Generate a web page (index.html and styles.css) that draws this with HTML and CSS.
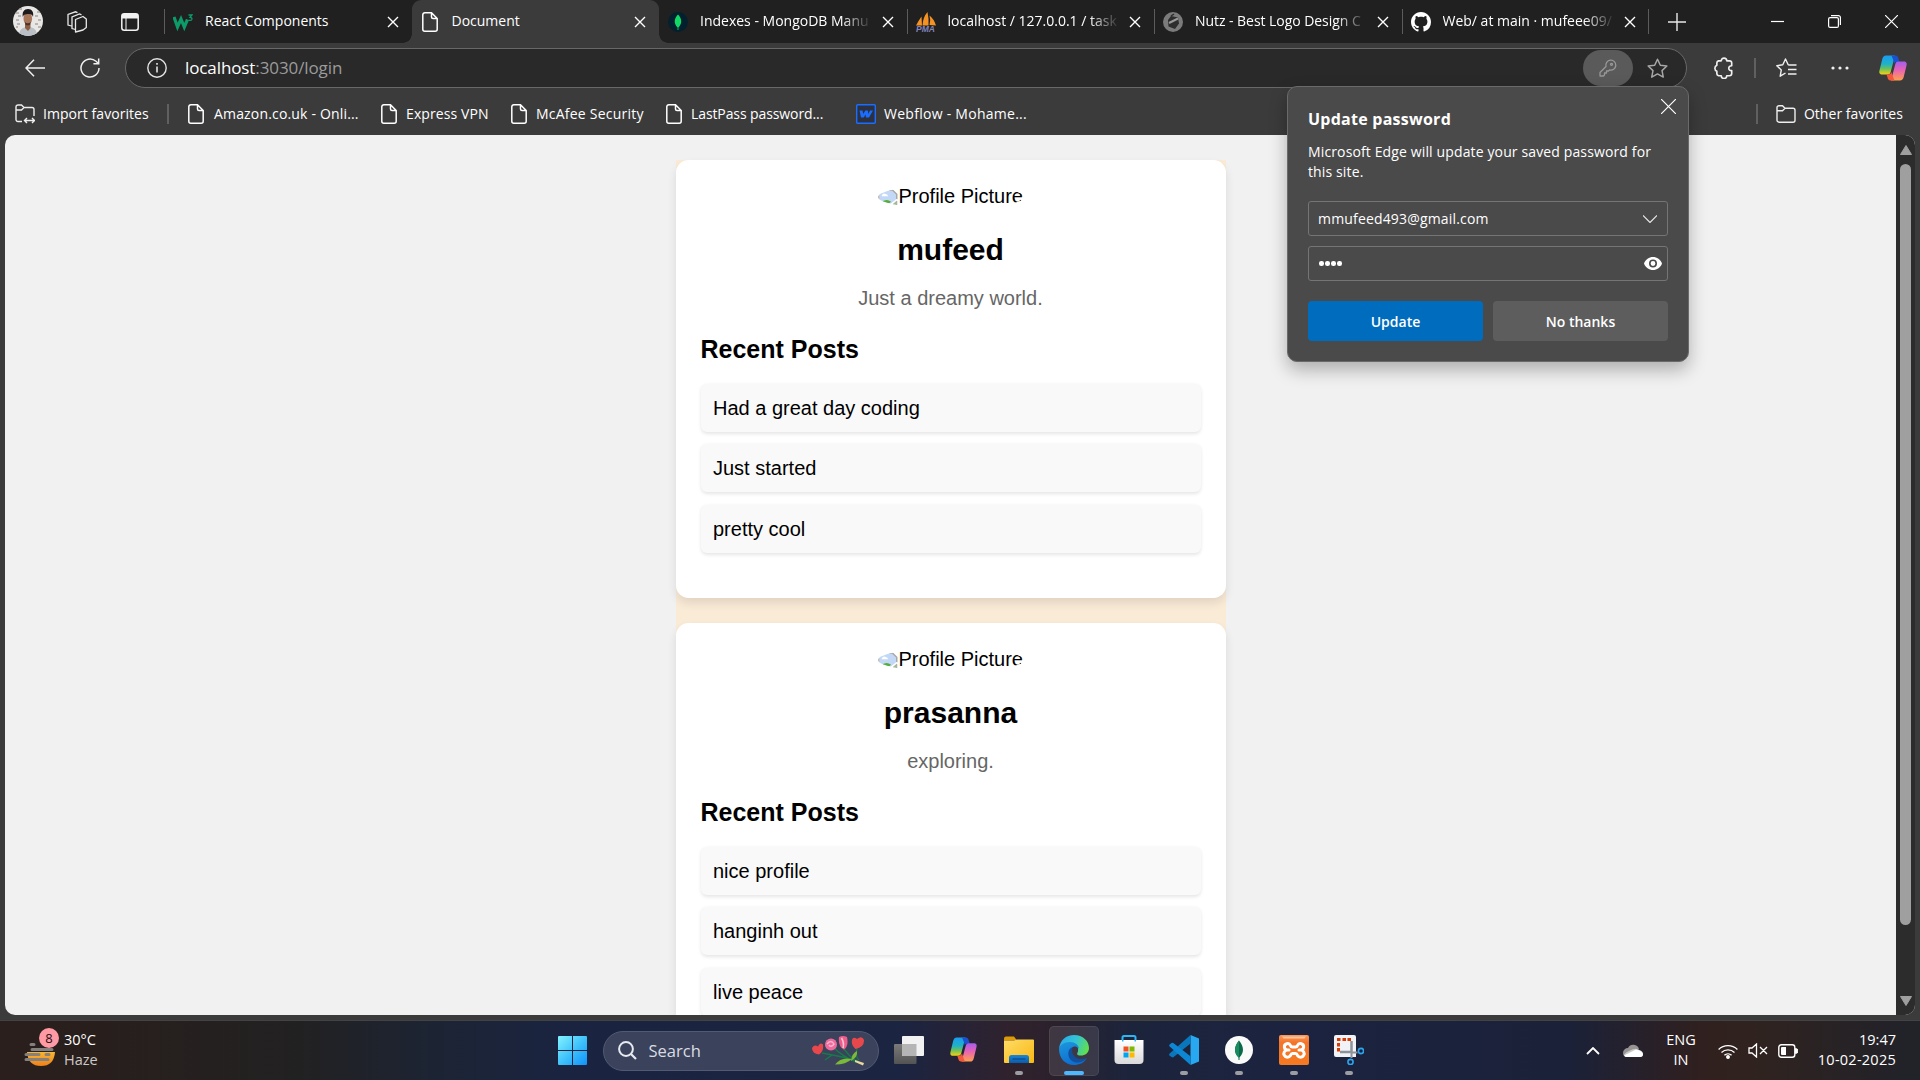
FILE: index.html
```html
<!DOCTYPE html>
<html lang="en">
<head>
<meta charset="utf-8">
<title>Document</title>
<link rel="stylesheet" href="styles.css">
</head>
<body>
<svg class="defs" width="0" height="0" aria-hidden="true">
  <defs>
    <linearGradient id="gWin" x1="0" y1="0" x2="1" y2="1"><stop offset="0" stop-color="#84f3ff"/><stop offset=".5" stop-color="#41c3fb"/><stop offset="1" stop-color="#0f93fb"/></linearGradient>
    <linearGradient id="gCopA" x1="0" y1="0" x2="0" y2="1"><stop offset="0" stop-color="#1b9cf0"/><stop offset=".45" stop-color="#1fb2c9"/><stop offset=".7" stop-color="#6cc05c"/><stop offset="1" stop-color="#f5d212"/></linearGradient>
    <linearGradient id="gCopB" x1="0" y1="0" x2="0" y2="1"><stop offset="0" stop-color="#a45cf0"/><stop offset=".45" stop-color="#e763b4"/><stop offset="1" stop-color="#ffa04c"/></linearGradient>
    <linearGradient id="gFold" x1="0" y1="0" x2="1" y2="1"><stop offset="0" stop-color="#ffdc66"/><stop offset="1" stop-color="#f8b814"/></linearGradient>
    <linearGradient id="gFoldB" x1="0" y1="0" x2="0" y2="1"><stop offset="0" stop-color="#1a86d6"/><stop offset="1" stop-color="#0b5cab"/></linearGradient>
    <linearGradient id="gEdgeT" x1="0" y1=".3" x2="1" y2=".6"><stop offset="0" stop-color="#2aa9ea"/><stop offset=".5" stop-color="#33c3d6"/><stop offset="1" stop-color="#62e04a"/></linearGradient>
    <linearGradient id="gEdgeB" x1="0" y1="0" x2=".4" y2="1"><stop offset="0" stop-color="#1c96dd"/><stop offset="1" stop-color="#0e6fd0"/></linearGradient>
    <linearGradient id="gStore" x1="0" y1="0" x2="0" y2="1"><stop offset="0" stop-color="#fff"/><stop offset="1" stop-color="#d9d9d9"/></linearGradient>
    <linearGradient id="gXa" x1="0" y1="0" x2="0" y2="1"><stop offset="0" stop-color="#fb9a5a"/><stop offset=".25" stop-color="#f4752a"/><stop offset="1" stop-color="#f57a20"/></linearGradient>
    <linearGradient id="gSun" x1="0" y1="0" x2="0" y2="1"><stop offset="0" stop-color="#f8b733"/><stop offset="1" stop-color="#f08019"/></linearGradient>
    <linearGradient id="gTvD" x1="0" y1="0" x2="0" y2="1"><stop offset="0" stop-color="#7a7a7a"/><stop offset="1" stop-color="#535353"/></linearGradient>
    <symbol id="x" viewBox="0 0 12 12"><path d="M1 1l10 10M11 1L1 11" fill="none" stroke="currentColor" stroke-width="1.4"/></symbol>
    <symbol id="page" viewBox="0 0 16 20"><path d="M2.8.8h6.7l5.7 5.7v10.7a2 2 0 0 1-2 2H2.8a2 2 0 0 1-2-2V2.800a2 2 0 0 1 2-2zM9.500.8v4.200a1.500 1.500 0 0 0 1.500 1.500h4.200" fill="none" stroke="currentColor" stroke-width="1.500"/></symbol>
    <symbol id="copilot" viewBox="0 0 28 26">
      <path d="M7 .5h9L11.600 17.200q-.6 2.300-2.800 2.300H3.200C0 19.500 0 17 .6 15L3.300 4C3.900 1.700 5 .5 7 .5z" fill="url(#gCopA)"/>
      <path d="M12.500.5h4c2 0 2.600 1.500 3.100 3.500l.9 3h-3c-1.200 0-1.900.7-2.200 1.700L14.300 5z" fill="#1b50cf"/>
      <path d="M21 25.500h-9l4.400-16.700q.6-2.300 2.800-2.300h5.600c3.200 0 3.200 2.500 2.600 4.500L24.700 22c-.6 2.300-1.700 3.500-3.700 3.500z" fill="url(#gCopB)"/>
      <path d="M15.500 25.500h-4c-2 0-2.600-1.500-3.100-3.500l-.9-2.600h2c1.600 0 2.500-.9 2.900-2.400l1.300 4z" fill="#f4583a"/>
    </symbol>
    <symbol id="broken" viewBox="0 0 16 16">
      <path d="M1 1.500h10.500L15 5v4l-8 6H1z" fill="#c3d8f7"/><path d="M9 1.500h2.500L15 5v4" fill="none" stroke="#a9a9a9" stroke-width="1.200"/><path d="M.6 1.500v13" stroke="#a9a9a9"/>
      <path d="M3 6q1.200-2.500 3.200-1.200Q8 5 8 6.500H3z" fill="#fff"/><path d="M2 14.500v-2.200q4-4.600 8.500-1.300L6 14.500z" fill="#56ad38"/><path d="M15 8.500v6H8z" fill="#fff"/><path d="M15 10.500v4h-4.500z" fill="#8fc57c" stroke="#a9a9a9" stroke-width=".8"/>
    </symbol>
  </defs>
</svg>

<header class="tabstrip">
  <div class="strip-tools">
    <svg class="avatar" viewBox="0 0 30 30"><clipPath id="av"><circle cx="15" cy="15" r="15"/></clipPath><g clip-path="url(#av)"><rect width="30" height="30" fill="#e9e7e6"/><path d="M2 7h4M24 6h3M3 14h3M25 14h3M3 21h2M25 21h3M6 3h3M5 10h3M22 10h3M4 18h3M22 18h3" stroke="#aaa5a2" stroke-width="1.600"/><path d="M6 30c0-7 4-9 9-9s9 2 9 9z" fill="#b9bfc4"/><path d="M12 18h5.500v4L15 25l-3-3z" fill="#8c5f45"/><ellipse cx="14.800" cy="12.500" rx="4.300" ry="6.500" fill="#a8765a"/><path d="M9.800 11C9 6 11 3 15 3s6 3 5 8c-.7-2.300-1.700-3-5-3s-4.300.7-5.200 3z" fill="#1d1b1d"/><path d="M11.800 16q3 2.500 6 0l-.6 2.500q-2.400 1.700-4.800 0z" fill="#4a3227"/></g></svg>
    <svg class="i-workspaces" viewBox="0 0 22 22" fill="none" stroke="#e8e8e8" stroke-width="1.300"><path d="M9.500 8.500l7.500-3 3.300 2.500v8.500l-3.300 2.500-7.500 2z" stroke-linejoin="round"/><path d="M9.500 18.500L6 17.500V6l7.500-3 2 .8M5.500 15L2 14V3.500L9.500.8l2 .8"/></svg>
    <svg class="i-vtabs" viewBox="0 0 18 18"><rect x=".8" y=".8" width="16.400" height="16.400" rx="2.500" fill="none" stroke="#f2f2f2" stroke-width="1.500"/><path d="M1 1h16v4.500H1z" fill="#f2f2f2"/><path d="M5 5v12" stroke="#f2f2f2" stroke-width="1"/></svg>
  </div>
  <div class="tab lead">
    <svg class="fav" viewBox="0 0 20 20"><path d="M1 5l3.500 10L8 7l3.300 8L14.500 7.500" fill="none" stroke="#0d9b69" stroke-width="3.200"/><path d="M15.500 3H19l-2 2.300q2.300.3 1.800 2.200-.7 1.500-3.300.6" fill="none" stroke="#0d9b69" stroke-width="1.300"/></svg>
    <span class="label">React Components</span><svg class="close"><use href="#x"/></svg>
  </div>
  <div class="tab active">
    <svg class="fav pg"><use href="#page"/></svg>
    <span class="label">Document</span><svg class="close"><use href="#x"/></svg>
  </div>
  <div class="tab">
    <svg class="fav" viewBox="0 0 20 20"><circle cx="10" cy="10" r="10" fill="#02202e"/><path d="M10 2.500c4 4 4.500 9 .4 13V18h-.8v-2.500C5.500 11.500 6 6.500 10 2.500z" fill="#12d965"/></svg>
    <span class="label fade">Indexes - MongoDB Manu</span><svg class="close"><use href="#x"/></svg>
  </div>
  <div class="tab sep">
    <svg class="fav" viewBox="0 0 20 20"><path d="M0 13.500Q3 8 5.500 4.500l.5 9zM6.500 13.500Q7 5 11.500 0q1.500 7 1 13.500zM13.500 13Q15 8 13.500 3.500 18 7 20 13.500z" fill="#f49323"/><text x="0" y="20" class="pma">PMA</text></svg>
    <span class="label fade">localhost / 127.0.0.1 / task</span><svg class="close"><use href="#x"/></svg>
  </div>
  <div class="tab sep">
    <svg class="fav" viewBox="0 0 20 20"><circle cx="10" cy="10" r="10" fill="#7b7b7b"/><path d="M5 8l3-4 7 1.500 1 6-4 5.500-6.500-2.500z" fill="#2d2d2d"/><path d="M6 11l9-4.500" stroke="#999" stroke-width="2"/><path d="M8 4l3-2" stroke="#2d2d2d" stroke-width="1.500"/></svg>
    <span class="label fade nutz">Nutz - Best Logo Design C</span><svg class="close"><use href="#x"/></svg>
  </div>
  <div class="tab sep last">
    <svg class="fav" viewBox="0 0 16 16"><path fill="#fff" d="M8 0C3.580 0 0 3.580 0 8c0 3.540 2.290 6.530 5.470 7.590.4.070.55-.17.55-.38 0-.19-.01-.82-.01-1.490-2.010.37-2.530-.49-2.690-.94-.09-.23-.48-.94-.82-1.130-.28-.15-.68-.52-.01-.53.63-.01 1.080.58 1.230.82.72 1.210 1.870.87 2.330.66.07-.52.28-.87.51-1.070-1.780-.2-3.640-.89-3.640-3.950 0-.87.31-1.590.82-2.150-.08-.2-.36-1.020.08-2.120 0 0 .67-.21 2.200.82.64-.18 1.320-.27 2-.27s1.360.09 2 .27c1.530-1.040 2.200-.82 2.200-.82.44 1.100.16 1.920.08 2.120.51.56.82 1.270.82 2.150 0 3.070-1.870 3.750-3.650 3.950.29.25.54.73.54 1.480 0 1.070-.01 1.930-.01 2.200 0 .21.15.46.55.38A8.010 8.010 0 0 0 16 8c0-4.420-3.580-8-8-8z"/></svg>
    <span class="label fade">Web/ at main · mufeee09/</span><svg class="close"><use href="#x"/></svg>
  </div>
  <svg class="plus" viewBox="0 0 18 18"><path d="M9 0v18M0 9h18" stroke="#e8e8e8" stroke-width="1.400"/></svg>
  <div class="wincontrols">
    <svg viewBox="0 0 13 13"><path d="M0 6.500h13" stroke="#fff" stroke-width="1.200"/></svg>
    <svg viewBox="0 0 13 13" fill="none" stroke="#fff" stroke-width="1.200"><rect x=".6" y="2.600" width="9.800" height="9.800" rx="1.500"/><path d="M3 .6h7.400a2 2 0 0 1 2 2V10"/></svg>
    <svg viewBox="0 0 13 13"><path d="M0 0l13 13M13 0L0 13" stroke="#fff" stroke-width="1.200"/></svg>
  </div>
</header>

<div class="toolbar">
  <svg class="i-back" viewBox="0 0 20 18" fill="none" stroke="#f0f0f0" stroke-width="1.500"><path d="M20 9H1M9 .8L1 9l8 8.200"/></svg>
  <svg class="i-reload" viewBox="0 0 20 20" fill="none" stroke="#f0f0f0" stroke-width="1.500"><path d="M19 10a9 9 0 1 1-3-6.700L18.500 5.500M18.700 .5v5.300h-5.300"/></svg>
  <div class="address">
    <svg class="i-info" viewBox="0 0 20 20"><circle cx="10" cy="10" r="9.200" fill="none" stroke="#e4e4e4" stroke-width="1.400"/><path d="M10 8.500v6M10 5v1.800" stroke="#e4e4e4" stroke-width="1.600"/></svg>
    <span class="url"><b>localhost</b>:3030/login</span>
    <span class="keypill"><svg viewBox="0 0 18 18" fill="none" stroke="#989898" stroke-width="1.300"><path d="M7 7.500A5 5 0 1 1 10.500 11L9.500 12H7.500v2H5.500v2L4.500 17H1v-3.500z" stroke-linejoin="round"/><circle cx="12.500" cy="5.300" r="1"/></svg></span>
    <svg class="i-star" viewBox="0 0 20 20"><path d="M10 1.200l2.700 5.700 6.200.8-4.600 4.300 1.200 6.200L10 15.200l-5.500 3 1.200-6.200L1.100 7.700l6.200-.8z" fill="none" stroke="#a8a8a8" stroke-width="1.400" stroke-linejoin="round"/></svg>
  </div>
  <svg class="i-puzzle" viewBox="0 0 20 20"><path d="M5 3.500h2.500a2.500 2.500 0 0 1 5 0H15a2 2 0 0 1 2 2V8a2.200 2.200 0 1 0 0 4.300V15a2 2 0 0 1-2 2h-2.500a2.500 2.500 0 0 1-5 0H5a2 2 0 0 1-1.500-2v-2a3 3 0 0 1 0-5.500v-2A2 2 0 0 1 5 3.500z" fill="none" stroke="#f0f0f0" stroke-width="1.500" stroke-linejoin="round"/></svg>
  <span class="vline"></span>
  <svg class="i-favs" viewBox="0 0 21 20" fill="none" stroke="#f0f0f0" stroke-width="1.400"><path d="M13.500 7l-1.300-.2L9.500 1 6.800 6.800.8 7.700l4.500 4.200L4.200 18.200 9.500 15M13 7h7.500M12 11.500h8.500M12 16h8.500" stroke-linejoin="round"/></svg>
  <svg class="i-dots" viewBox="0 0 18 4" fill="#f0f0f0"><circle cx="2" cy="2" r="1.600"/><circle cx="9" cy="2" r="1.600"/><circle cx="16" cy="2" r="1.600"/></svg>
  <svg class="i-copilot"><use href="#copilot"/></svg>
</div>

<nav class="bookmarks">
  <div class="bm b0"><svg class="i20" viewBox="0 0 20 20" fill="none" stroke="#eee" stroke-width="1.400"><path d="M7 17.500H3a2 2 0 0 1-2-2V3a2 2 0 0 1 2-2h3.500L9 3.500h8a2 2 0 0 1 2 2V12M1 6h5.500L9 3.500M9.500 16.500h10M12 14l-2.500 2.500L12 19M17 14l2.500 2.500L17 19"/></svg><span>Import favorites</span></div>
  <span class="vline"></span>
  <div class="bm b1"><svg class="i16"><use href="#page"/></svg><span>Amazon.co.uk - Onli...</span></div>
  <div class="bm b2"><svg class="i16"><use href="#page"/></svg><span>Express VPN</span></div>
  <div class="bm b3"><svg class="i16"><use href="#page"/></svg><span>McAfee Security</span></div>
  <div class="bm b4"><svg class="i16"><use href="#page"/></svg><span>LastPass password...</span></div>
  <div class="bm b5"><svg class="i20" viewBox="0 0 20 20"><rect x=".7" y=".7" width="18.600" height="18.600" rx="1" fill="#2b3140" stroke="#1a6dff" stroke-width="1.400"/><path d="M3.500 6.500h3l.8 3.500 2-3.500h2.500l.6 3.500 1.600-3.500h3L13 13.500h-3l-.5-3-1.700 3H5z" fill="#1a6dff"/></svg><span>Webflow - Mohame...</span></div>
  <div class="bm other"><span class="vline"></span><svg class="i20" viewBox="0 0 20 20" fill="none" stroke="#eee" stroke-width="1.400"><path d="M3 1.700h3.500L9 4.200h8a2 2 0 0 1 2 2v10a2 2 0 0 1-2 2H3a2 2 0 0 1-2-2V3.700a2 2 0 0 1 2-2zM1 6.700h5.500L9 4.200"/></svg><span>Other favorites</span></div>
</nav>

<main class="viewport">
  <div class="page">
    <div class="feed">
      <section class="card">
        <div class="pic"><span class="missing"><svg><use href="#broken"/></svg>Profile Picture</span></div>
        <h2>mufeed</h2>
        <p class="bio">Just a dreamy world.</p>
        <h3>Recent Posts</h3>
        <ul><li>Had a great day coding</li><li>Just started</li><li>pretty cool</li></ul>
      </section>
      <section class="card">
        <div class="pic"><span class="missing"><svg><use href="#broken"/></svg>Profile Picture</span></div>
        <h2>prasanna</h2>
        <p class="bio">exploring.</p>
        <h3>Recent Posts</h3>
        <ul><li>nice profile</li><li>hanginh out</li><li>live peace</li></ul>
      </section>
    </div>
  </div>
  <div class="scrollbar">
    <svg viewBox="0 0 12 10"><path d="M6 .5L11.500 9.500H.5z" fill="#9f9f9f" stroke="#9f9f9f" stroke-linejoin="round"/></svg>
    <span class="thumb"></span>
    <svg viewBox="0 0 12 10"><path d="M6 9.500L.5.5h11z" fill="#9f9f9f" stroke="#9f9f9f" stroke-linejoin="round"/></svg>
  </div>
</main>

<footer class="taskbar">
  <div class="weather">
    <svg class="haze" viewBox="0 0 32 36"><path d="M3 21h28q-1 14-14 14T3 21z" fill="url(#gSun)"/><path d="M7 13.500h3M8 18.500h20M2 23.500h13M22 23.500h3M2 28.500h22" stroke="#83807e" stroke-width="3" stroke-linecap="round"/></svg>
    <span class="badge">8</span>
    <div class="wtext"><span>30°C</span><span class="dim">Haze</span></div>
  </div>
  <div class="apps">
    <div class="app start"><svg viewBox="0 0 29 29"><path d="M0 1a1 1 0 0 1 1-1h13v14H0zM15 0h13a1 1 0 0 1 1 1v13H15zM0 15h14v14H1a1 1 0 0 1-1-1zM15 15h14v13a1 1 0 0 1-1 1H15z" fill="url(#gWin)"/></svg></div>
    <div class="search">
      <svg class="mag" viewBox="0 0 19 19"><circle cx="8" cy="8" r="6.900" fill="none" stroke="#e8eaf0" stroke-width="2"/><path d="M13 13l5 5" stroke="#e8eaf0" stroke-width="2.200"/></svg>
      <span>Search</span>
      <svg class="flowers" viewBox="0 0 53 30"><path d="M10 17q18 3 36 8M22 12q8 8 22 14M31 12q6 8 14 14M45 12q-2 9 2 12M20 19l-7 5" fill="none" stroke="#187a4a" stroke-width="1.400"/><path d="M23 28.500q6-8 17-5.500-6 5.500-17 5.500zM39 25q1-8 6-10 1 6-6 10z" fill="#7cb83a"/><path d="M43 24l9 3-1 2.500-8-3.500z" fill="#ecd7a0"/><circle cx="19" cy="8.500" r="6" fill="#ee6a9c"/><path d="M15 8q4-5 7 0-3 4-5 1" fill="none" stroke="#ffb5cd" stroke-width="1.400"/><path d="M27 1q4-2 8 0 2 9-3 12.500-6-2.500-5-12.500z" fill="#ef5d8c"/><path d="M29.500 2q3 5 1.500 10" stroke="#ffc4d6" fill="none" stroke-width="1.600"/><path d="M0 12q2.500-4 6-1.500Q8 6 11 8.500q1 7-4 10Q0 17.500 0 12zM40 4q1-4 5-1 5-4 7 1 .5 7-8.500 9Q39 9 40 4z" fill="#e8484c"/></svg>
    </div>
    <div class="app"><svg viewBox="0 0 30 28"><rect y="8" width="22.500" height="20" rx="1" fill="url(#gTvD)"/><rect x="8" width="22" height="20" rx="1" fill="#f2f2f2"/><path d="M8 8h14.500v12H9a1 1 0 0 1-1-1z" fill="#b5b5b5"/></svg></div>
    <div class="app"><svg class="s28"><use href="#copilot"/></svg></div>
    <div class="app run"><svg viewBox="0 0 30 27"><path d="M0 2a2 2 0 0 1 2-2h8l3 4H0z" fill="#dd9a0a"/><path d="M0 4h10l3-1h16a1 1 0 0 1 1 1v21.500a1 1 0 0 1-1 1H1a1 1 0 0 1-1-1z" fill="url(#gFold)"/><path d="M5 26.500V21a2.500 2.500 0 0 1 2.500-2.500h15A2.500 2.500 0 0 1 25 21v5.500z" fill="url(#gFoldB)"/><path d="M8.500 22.500h13" stroke="#084a8c" stroke-width="1.200"/></svg></div>
    <div class="app focus"><svg viewBox="0 0 30 30"><path d="M0 14C1 5 7 0 15 0c9 0 15 6 15 13 0 5-4 7.500-8 7.500-5 0-4-2-3-4C20 11 16 8 11 8 6 8 2 10 0 14z" fill="url(#gEdgeT)"/><path d="M0 14c1-4 5-7 11-7 5 0 9 3 8.800 7-1-2-3-3-5.800-2C9 14 9 22 17 25c4 1.500 8 1 11-2-3 5-8 7-13 7C6 30 0 23 0 14z" fill="url(#gEdgeB)"/><path d="M13.500 12.200C8 14 8 22 13 26c5 3 11 1.500 15-3-8 3.500-17-1.500-14.500-10.800z" fill="#11509c"/></svg></div>
    <div class="app"><svg class="store" viewBox="0 0 29 30"><path d="M8 7V2.500A1.500 1.500 0 0 1 9.500 1h10A1.500 1.500 0 0 1 21 2.500V7" fill="none" stroke="#2cb6f2" stroke-width="2"/><path d="M0 5h29v20a4 4 0 0 1-4 4H4a4 4 0 0 1-4-4z" fill="url(#gStore)"/><path d="M7.500 5v1.500h1.500V5M20 5v1.500h1.500V5" fill="#2cb6f2"/><path d="M9 11.500h5v5H9z" fill="#f25022"/><path d="M15 11.500h5v5h-5z" fill="#7fba00"/><path d="M9 17.500h5v5H9z" fill="#00a4ef"/><path d="M15 17.500h5v5h-5z" fill="#ffb900"/></svg></div>
    <div class="app run"><svg viewBox="0 0 30 30"><path d="M21.500 0L30 3.500v23L21.500 30z" fill="#29a8f2"/><path d="M21.500 0v8.500L4 22.500 2 21.800.5 20.500q-.8-1 .2-2z" fill="#0a77bd"/><path d="M.7 11.500q-1-1 0-2L2.500 8 4 7.700l17.500 13.500V30z" fill="#0d86d3"/></svg></div>
    <div class="app run"><svg viewBox="0 0 30 30"><circle cx="15" cy="15" r="14" fill="#fafafa"/><path d="M15 5.500c5 6 5.500 12 .5 17V25h-1v-2.500c-5-5-4.500-11 .5-17z" fill="#0b6a4c"/><path d="M15 5.500c-5 6-5.500 12-.5 17H15z" fill="#1a8a5f"/></svg></div>
    <div class="app run"><svg viewBox="0 0 30 30"><rect width="30" height="30" rx="2" fill="url(#gXa)"/><path d="M3 1.500h24l-1.500 2h-21z" fill="#fbc49d"/><path d="M10 15H8.500a3.200 3.200 0 1 1 3-4.500q.5 1.500 2 1.500h3q1.500 0 2-1.500a3.200 3.200 0 1 1 3 4.500H20M8.500 15a3.600 3.600 0 1 0 3 5.500q.7-2 2-2h3q1.300 0 2 2a3.600 3.600 0 1 0 3-5.500" fill="none" stroke="#fff" stroke-width="3" stroke-linecap="round"/></svg></div>
    <div class="app run"><svg viewBox="0 0 30 30"><path d="M2 0h18a2 2 0 0 1 2 2v20H2a2 2 0 0 1-2-2V2a2 2 0 0 1 2-2z" fill="#f1f3f6"/><path d="M3 3h3.500v3H3zM8.500 3H12v3H8.500zM13.500 3H17v3h-3.500zM3 8h3v3.500H3zM3 13h3v3.500H3z" fill="#d83b01"/><path d="M6 17h11.500V6" fill="none" stroke="#8d939b" stroke-width="2.500"/><path d="M17.500 17v6M17.500 17.500h6" stroke="#8d939b" stroke-width="2"/><circle cx="16.500" cy="27" r="2.600" fill="none" stroke="#2aa5ee" stroke-width="1.600"/><circle cx="27" cy="16" r="2.600" fill="none" stroke="#2aa5ee" stroke-width="1.600"/></svg></div>
  </div>
  <div class="tray">
    <svg class="chev" viewBox="0 0 14 8"><path d="M1 7l6-6 6 6" fill="none" stroke="#fff" stroke-width="1.800"/></svg>
    <svg class="cloud" viewBox="0 0 20 14"><path d="M0 9a5 5 0 0 1 5-5 6 6 0 0 1 11 1l-8 8H4a4 4 0 0 1-4-4z" fill="#979391"/><path d="M1 10.500Q3 8 7 6.500q5-3 8-1 5 1 5 4.500a3 3 0 0 1-3 3H4q-2 0-3-2.500z" fill="#c9c9c9"/><path d="M1 11.500L13 5.500q6 1 7 4.500 0 3-3 3H4q-2 0-3-1.500z" fill="#fff"/></svg>
    <div class="lang"><span>ENG</span><span>IN</span></div>
    <svg class="wifi" viewBox="0 0 20 16" fill="none" stroke="#fff" stroke-width="1.300"><path d="M.6 6.500a13.500 13.500 0 0 1 18.800 0M3.500 9.500a9.300 9.300 0 0 1 13 0M6.400 12.300a5.200 5.200 0 0 1 7.200 0"/><circle cx="10" cy="14" r="1.300" fill="#fff"/></svg>
    <svg class="mute" viewBox="0 0 20 15" fill="none" stroke="#fff" stroke-width="1.300"><path d="M1 5h3l4.500-4v13L4 10H1zM12 4l7 7M19 4l-7 7"/></svg>
    <svg class="bat" viewBox="0 0 20 14"><rect x=".8" y=".8" width="16" height="12.400" rx="2.500" fill="none" stroke="#fff" stroke-width="1.400"/><path d="M3 4a1 1 0 0 1 1-1h4v8H4a1 1 0 0 1-1-1z" fill="#fff"/><path d="M17.500 4.500a2.500 2.500 0 0 1 0 5z" fill="#fff" stroke="#fff"/></svg>
    <div class="clock"><span class="time">19:47</span><span class="date">10-02-2025</span></div>
  </div>
</footer>

<aside class="popup">
  <svg class="dismiss" viewBox="0 0 15 15"><path d="M0 0l15 15M15 0L0 15" stroke="#fff" stroke-width="1.200"/></svg>
  <div class="p-title"><span>Update password</span></div>
  <p class="p-desc">Microsoft Edge will update your saved password for<br>this site.</p>
  <div class="field"><span>mmufeed493@gmail.com</span><svg class="caret" viewBox="0 0 14 8"><path d="M0 .5l7 7 7-7" fill="none" stroke="#e6e6e6" stroke-width="1.200"/></svg></div>
  <div class="field second"><span class="dots"><i></i><i></i><i></i><i></i></span><svg class="eye" viewBox="0 0 18 13"><path d="M9 0c4 0 7.500 2.500 9 6.500C16.500 10.500 13 13 9 13S1.500 10.500 0 6.500C1.500 2.500 5 0 9 0z" fill="#fff"/><circle cx="9" cy="6.500" r="3.200" fill="none" stroke="#4a4a4a" stroke-width="1.600"/></svg></div>
  <div class="p-btns"><button class="primary">Update</button><button>No thanks</button></div>
</aside>
</body>
</html>
```

FILE: styles.css
```css
* { box-sizing: border-box; }
body {
  margin: 0;
  width: 1920px;
  height: 1080px;
  overflow: hidden;
  position: relative;
  display: flex;
  flex-direction: column;
  background: #3b3b3b;
  color: #fff;
  font: 14px/20px "Open Sans", "Noto Sans", sans-serif;
}
svg { display: block; flex: none; }
.defs { position: absolute; }
span, button { white-space: nowrap; }

/* Tab strip */
.tabstrip { display: flex; align-items: center; height: 43px; flex: none; background: #202020; }
.strip-tools { display: flex; align-items: center; width: 164px; padding-left: 13px; }
.avatar { width: 30px; height: 30px; margin-bottom: 1px; }
.i-workspaces { width: 22px; height: 22px; margin-left: 23px; }
.i-vtabs { width: 18px; height: 18px; margin-left: 33px; }
.tab { position: relative; display: flex; align-items: center; width: 247.5px; height: 43px; padding-left: 9px; flex: none; }
.tab.sep, .tab.lead { background: linear-gradient(#5c5c5c, #5c5c5c) -0.5px 9px / 1.5px 25px no-repeat; }
.tab.last { background: linear-gradient(#5c5c5c, #5c5c5c) -0.5px 9px / 1.5px 25px no-repeat, linear-gradient(#5c5c5c, #5c5c5c) 246px 9px / 1.5px 25px no-repeat; }
.tab.active { background: #3b3b3b; border-radius: 9px 9px 0 0; }
.tab.active::before, .tab.active::after { content: ""; position: absolute; bottom: 0; width: 9px; height: 9px; }
.tab.active::before { left: -9px; background: radial-gradient(circle at 0 0, #202020 8.5px, #3b3b3b 9px); }
.tab.active::after { right: -9px; background: radial-gradient(circle at 100% 0, #202020 8.5px, #3b3b3b 9px); }
.fav { width: 20px; height: 20px; margin-right: 12px; }
.fav.pg { width: 16px; margin: 0 14px 0 1px; }
.tab.active .label { width: 173px; }
.pma { font: italic bold 8.5px "Liberation Sans", sans-serif; fill: #8183b8; }
.label { width: 172px; margin-bottom: 2px; }
.fade { -webkit-mask-image: linear-gradient(90deg, #000 82%, transparent 100%); mask-image: linear-gradient(90deg, #000 82%, transparent 100%); }
.nutz { letter-spacing: -0.05px; }
.close { width: 12px; height: 12px; margin-left: 9.5px; }
.plus { width: 18px; height: 18px; margin-left: 19px; }
.wincontrols { display: flex; gap: 44px; margin-left: auto; padding-right: 22.5px; }
.wincontrols svg { width: 13px; height: 13px; }

/* Toolbar */
.toolbar { display: flex; align-items: center; height: 50px; flex: none; padding-left: 25px; }
.i-back { width: 20px; height: 18px; }
.i-reload { width: 20px; height: 20px; margin-left: 35px; }
.address { display: flex; align-items: center; width: 1562px; height: 40px; margin-left: 25px; padding-left: 21px; border: 1px solid #686868; border-radius: 20px; background: #292929; }
.i-info { width: 20px; height: 20px; }
.url { margin-left: 18px; font-size: 17px; letter-spacing: -0.1px; color: #9b9b9b; flex: 1; }
.url b { font-weight: 400; color: #fff; }
.keypill { display: grid; place-items: center; width: 50px; height: 36px; border-radius: 18px; background: #5a5a5a; }
.keypill svg { width: 18px; height: 18px; }
.i-star { width: 21px; height: 21px; margin: 0 18px 0 14px; }
.i-puzzle { width: 22px; height: 22px; margin-left: 26px; }
.vline { width: 1.500px; height: 20px; background: #606060; }
.toolbar .vline { height: 20px; margin: 0 20px 0 19px; }
.i-favs { width: 21px; height: 20px; }
.i-dots { width: 18px; height: 4px; margin-left: 34px; }
.i-copilot { width: 28px; height: 26px; margin-left: 30px; }

/* Bookmarks */
.bookmarks { display: flex; align-items: center; height: 42px; flex: none; padding: 0 17px 0 15px; }
.bm { display: flex; align-items: center; flex: none; }
.i20 { width: 20px; height: 20px; margin-right: 8px; }
.i16 { width: 16px; height: 20px; margin-right: 10px; }
.b0 { width: 152px; }
.b0 span { letter-spacing: 0.05px; }
.bookmarks > .vline { margin-right: 19.500px; }
.b1 { width: 193px; }
.b1 span { letter-spacing: 0.17px; }
.b2 { width: 130px; }
.b2 .i16, .b3 .i16, .b4 .i16 { margin-right: 9px; }
.b2 span { letter-spacing: 0.1px; }
.b3 { width: 155px; }
.b3 span { letter-spacing: 0.23px; }
.b4 { width: 190px; }
.b4 span { letter-spacing: -0.1px; }
.b5 span { letter-spacing: 0.27px; }
.other { margin-left: auto; }
.other .vline { margin-right: 18px; }
.other span:last-child { letter-spacing: 0.05px; }

/* Page viewport */
.viewport { display: flex; height: 880px; flex: none; margin: 0 5px; border-radius: 10px; overflow: hidden; background: #f1f1f1; }
.page { flex: 1; display: flex; justify-content: center; padding-top: 25px; overflow: hidden; font: 20px/23px "Liberation Sans", Arial, sans-serif; color: #000; }
.feed { width: 550px; height: 1000px; flex: none; background: #faebd7; }
.card { height: 438px; margin-bottom: 25px; padding: 25px; border-radius: 12.5px; background: #fff; box-shadow: 0 5px 10px rgba(0, 0, 0, .1); text-align: center; }
.pic { display: flex; justify-content: center; height: 48px; }
.missing { display: flex; width: 146px; height: 24px; border-radius: 50%; overflow: hidden; }
.missing svg { width: 20px; height: 20px; margin: 3px 1px 0 0; }
h2 { margin: 0; font-size: 30px; line-height: 34px; }
.bio { margin: 20px 0 25px; color: #666; }
h3 { margin: 0; font-size: 25px; line-height: 29px; text-align: left; }
ul { list-style: none; margin: 19.750px 0 0; padding: 0; text-align: left; }
li { height: 48px; margin-bottom: 12.500px; padding: 13px 12.500px 0; border-radius: 6.250px; background: #f9f9f9; box-shadow: 0 1.250px 3.750px rgba(0, 0, 0, .1); }
.scrollbar { display: flex; flex-direction: column; align-items: center; width: 19px; padding: 10px 0 9px; background: #2c2c2c; }
.scrollbar svg { width: 12px; height: 10px; }
.thumb { width: 11px; height: 761px; margin: 9px 0 auto; border-radius: 6px; background: #9f9f9f; }

/* Taskbar */
.taskbar { display: flex; align-items: center; height: 60px; margin-top: auto; flex: none; position: relative; border-top: 1px solid #434345; font-size: 14.500px; background: linear-gradient(90deg, #2a1f1c 0, #281f1d 100px, #222122 300px, #1c2434 440px, #1a2440 560px, #1b2441 900px, #30222d 1010px, #2b212c 1050px, #1c243c 1130px, #1b2340 1300px, #1b2138 1570px, #30201f 1700px, #30231f 1750px, #222229 1900px); }
.weather { position: relative; display: flex; width: 547.500px; padding-left: 24px; }
.haze { width: 32px; height: 36px; margin-top: -1px; }
.badge { position: absolute; left: 39px; top: -4px; width: 20px; height: 20px; border-radius: 50%; background: #ff99a4; color: #1b1014; font-size: 13px; text-align: center; }
.wtext { display: flex; flex-direction: column; margin: -2px 0 0 8px; }
.dim { color: #cdc9c7; }
.apps { display: flex; gap: 5px; height: 50px; align-items: center; }
.app { display: flex; flex-direction: column; align-items: center; justify-content: center; width: 50px; height: 50px; position: relative; border-radius: 5px; }
.app svg { width: 30px; height: 30px; margin-bottom: 1px; }
.app .s28 { width: 27px; height: 25px; margin-bottom: 3px; }
.start svg { width: 29px; height: 29px; margin-bottom: 0; }
.focus { background: rgba(255, 255, 255, .1); border: 1px solid rgba(255, 255, 255, .08); }
.run::after, .focus::after { content: ""; position: absolute; bottom: 1px; width: 8px; height: 4px; border-radius: 2px; background: #9c9ca3; }
.focus::after { width: 20px; background: #4cb8ff; bottom: 0; }
.search { display: flex; align-items: center; width: 276px; height: 40px; padding-left: 14px; border-radius: 20px; border: 1px solid #515a71; background: #3a435b; color: #d9dce3; font-size: 16.500px; }
.mag { width: 19px; height: 19px; margin-right: 12px; }
.search span { width: 163px; }
.flowers { width: 53px; height: 30px; }
.tray { display: flex; align-items: center; margin-left: auto; padding-right: 24px; }
.chev { width: 14px; height: 8px; }
.cloud { width: 20px; height: 14px; margin-left: 23px; }
.lang { display: flex; flex-direction: column; align-items: center; width: 40px; margin: 0 17px 2px 18px; }
.wifi { width: 20px; height: 16px; }
.mute { width: 20px; height: 15px; margin-left: 10px; }
.bat { width: 20px; height: 14px; margin-left: 10px; }
.clock { display: flex; flex-direction: column; align-items: flex-end; width: 98px; margin-bottom: 2px; }
.date { letter-spacing: 0.25px; }

/* Password prompt */
.popup { position: absolute; left: 1287px; top: 86px; width: 402px; height: 276px; padding: 20px 20px 0; border: 1px solid #6a6a6a; border-radius: 10px; background: #4a4a4a; box-shadow: 0 8px 18px rgba(0, 0, 0, .28); }
.dismiss { position: absolute; right: 12px; top: 12px; width: 15px; height: 15px; }
.p-title { font-size: 16px; line-height: 24px; font-weight: 700; letter-spacing: 0.25px; }
.p-desc { margin: 11px 0 19px; letter-spacing: 0.13px; }
.field { display: flex; align-items: center; justify-content: space-between; width: 360px; height: 35px; padding: 0 5px 0 9px; border: 1px solid #757575; border-radius: 3px; letter-spacing: 0.17px; }
.second { margin-top: 10px; }
.caret { width: 14px; height: 8px; margin-right: 5px; }
.eye { width: 18px; height: 13px; }
.dots { display: flex; gap: 1.500px; padding: 0 1px; }
.dots i { width: 4.500px; height: 4.500px; border-radius: 50%; background: #fff; }
.p-btns { display: flex; gap: 10px; margin-top: 20px; width: 360px; }
button { flex: 1; height: 40px; padding: 0; border: 0; border-radius: 4px; background: #5d5d5d; color: #fff; font: 600 14px "Open Sans", "Noto Sans", sans-serif; }
.primary { background: #006cbe; }
```
